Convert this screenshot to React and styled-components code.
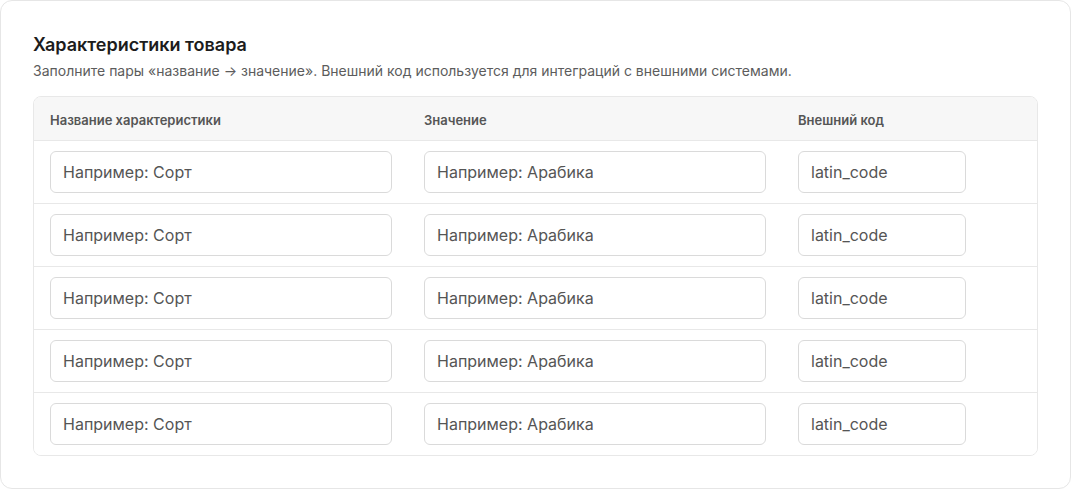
import styled, { createGlobalStyle } from 'styled-components';

const Global = createGlobalStyle`
    * { box-sizing: border-box; }
    body {
        margin: 0;
        background: #ffffff;
        font-family: Inter, "Noto Sans", sans-serif;
    }
`;

const Page = styled.div`
    padding: 0 1px 1px 0;
`;

const Card = styled.section`
    border: 1px solid #e6e6e6;
    border-radius: 12px;
    padding: 32px;
    background: #fff;
`;

const Title = styled.h2`
    margin: 0;
    font-size: 18px;
    line-height: 24px;
    font-weight: 600;
    color: #1c1c1c;
`;

const Hint = styled.p`
    margin: 4px 0 15px;
    font-size: 14px;
    line-height: 20px;
    color: #5c5c5c;
`;

const Table = styled.div`
    border: 1px solid #e8e8e8;
    border-radius: 8px;
    overflow: hidden;
`;

const Row = styled.div`
    display: grid;
    grid-template-columns: 374px 374px 1fr;
    align-items: center;
    height: ${p => (p.$head ? '44px' : '63px')};
    background: ${p => (p.$head ? '#f7f7f7' : '#fff')};
    border-bottom: 1px solid #e8e8e8;

    &:last-child {
        border-bottom: none;
        height: 62px;
    }
`;

const Cell = styled.div`
    padding: 0 16px;
`;

const HeadLabel = styled.span`
    font-size: 13px;
    font-weight: 600;
    color: #555;
`;

const Field = styled.input`
    display: block;
    width: ${p => p.$width || '100%'};
    height: 42px;
    padding: 0 12px;
    border: 1px solid #dadada;
    border-radius: 6px;
    font-family: inherit;
    font-size: 16px;
    color: #222;
    background: #fff;
    outline: none;

    &::placeholder {
        color: #555;
    }
`;

const rows = [1, 2, 3, 4, 5];

const App = () => {
    return (
        <Page>
            <Global />
            <Card>
                <Title>Характеристики товара</Title>
                <Hint>Заполните пары «название → значение». Внешний код используется для интеграций с внешними системами.</Hint>
                <Table>
                    <Row $head>
                        <Cell><HeadLabel>Название характеристики</HeadLabel></Cell>
                        <Cell><HeadLabel>Значение</HeadLabel></Cell>
                        <Cell><HeadLabel>Внешний код</HeadLabel></Cell>
                    </Row>
                    {rows.map(r => (
                        <Row key={r}>
                            <Cell><Field placeholder="Например: Сорт" /></Cell>
                            <Cell><Field placeholder="Например: Арабика" /></Cell>
                            <Cell><Field $width="168px" placeholder="latin_code" /></Cell>
                        </Row>
                    ))}
                </Table>
            </Card>
        </Page>
    );
};

export default App;
